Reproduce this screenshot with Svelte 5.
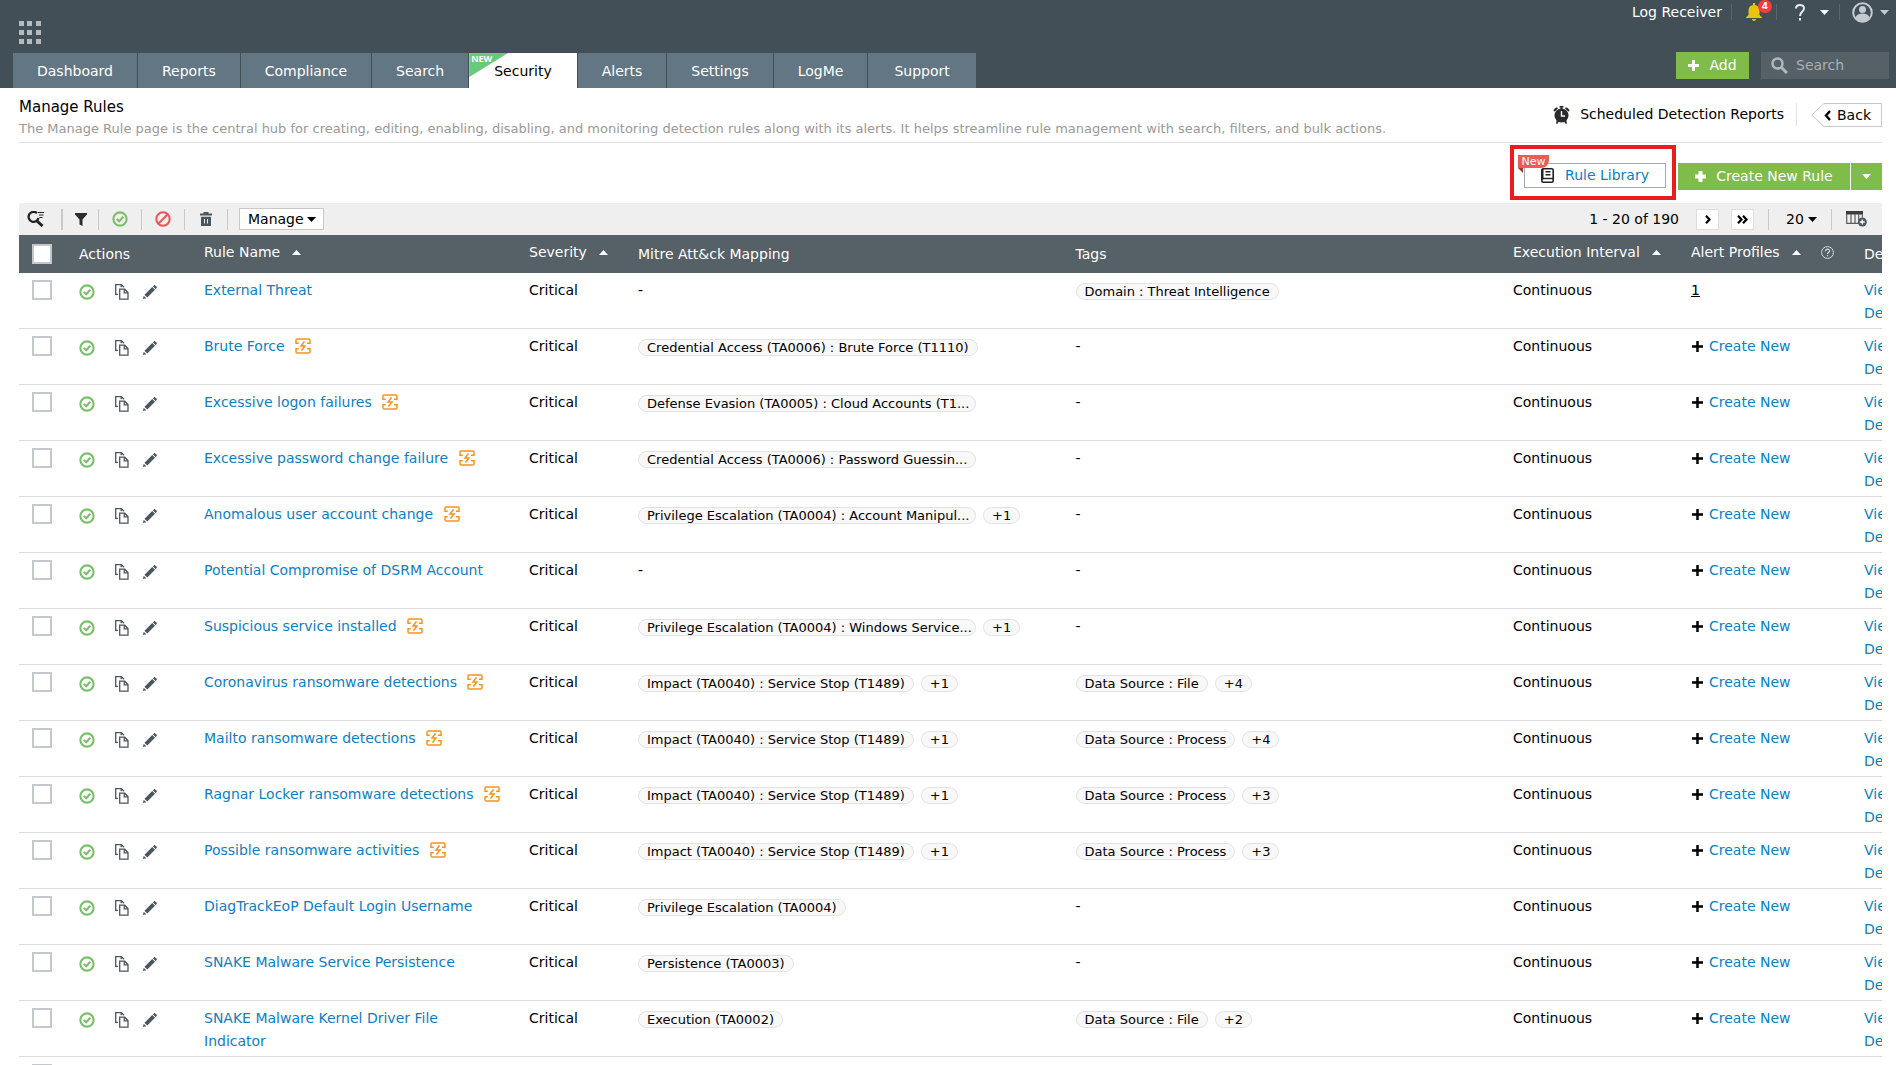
<script>
	const tabs = ['Dashboard', 'Reports', 'Compliance', 'Search', 'Security', 'Alerts', 'Settings', 'LogMe', 'Support'];
	const activeTab = 'Security';

	const stop = 'Impact (TA0040) : Service Stop (T1489)';

	const rules = [
		{ name: 'External Threat', tag: 'Domain : Threat Intelligence', profiles: 1 },
		{ name: 'Brute Force', ml: true, mitre: 'Credential Access (TA0006) : Brute Force (T1110)' },
		{ name: 'Excessive logon failures', ml: true, mitre: 'Defense Evasion (TA0005) : Cloud Accounts (T1...', cut: true },
		{ name: 'Excessive password change failure', ml: true, mitre: 'Credential Access (TA0006) : Password Guessin...', cut: true },
		{ name: 'Anomalous user account change', ml: true, mitre: 'Privilege Escalation (TA0004) : Account Manipul...', cut: true, mitreMore: 1 },
		{ name: 'Potential Compromise of DSRM Account' },
		{ name: 'Suspicious service installed', ml: true, mitre: 'Privilege Escalation (TA0004) : Windows Service...', cut: true, mitreMore: 1 },
		{ name: 'Coronavirus ransomware detections', ml: true, mitre: stop, mitreMore: 1, tag: 'Data Source : File', tagMore: 4 },
		{ name: 'Mailto ransomware detections', ml: true, mitre: stop, mitreMore: 1, tag: 'Data Source : Process', tagMore: 4 },
		{ name: 'Ragnar Locker ransomware detections', ml: true, mitre: stop, mitreMore: 1, tag: 'Data Source : Process', tagMore: 3 },
		{ name: 'Possible ransomware activities', ml: true, mitre: stop, mitreMore: 1, tag: 'Data Source : Process', tagMore: 3 },
		{ name: 'DiagTrackEoP Default Login Username', mitre: 'Privilege Escalation (TA0004)' },
		{ name: 'SNAKE Malware Service Persistence', mitre: 'Persistence (TA0003)' },
		{ name: 'SNAKE Malware Kernel Driver File Indicator', mitre: 'Execution (TA0002)', tag: 'Data Source : File', tagMore: 2 }
	];
</script>

{#snippet caret()}
	<svg class="caret" width="9" height="5" viewBox="0 0 9 5" aria-hidden="true"><path d="M0 0h9L4.500 5z" fill="currentColor" /></svg>
{/snippet}

{#snippet sortArrow()}
	<svg width="9" height="5" viewBox="0 0 9 5" aria-hidden="true"><path d="M0 5h9L4.500 0z" fill="#fff" /></svg>
{/snippet}

{#snippet plus(weight)}
	<svg width="11" height="11" viewBox="0 0 11 11" stroke="currentColor" stroke-width={weight} aria-hidden="true"><path d="M5.500 0v11M0 5.500h11" /></svg>
{/snippet}

{#snippet enabled()}
	<svg width="16" height="16" viewBox="0 0 16 16" fill="none" stroke="#7bbf6a" aria-hidden="true">
		<circle cx="8" cy="8" r="6.600" stroke-width="2.100" />
		<path d="M4.800 8l2.400 2.300 4.200-4.500" stroke-width="2.200" />
	</svg>
{/snippet}

{#snippet chips(text, more, cut)}
	{#if text}
		<span class="chip" class:cut>{text}</span>{#if more}<button class="chip more">+{more}</button>{/if}
	{:else}
		<span>-</span>
	{/if}
{/snippet}

<div class="page">
	<header>
		<div class="left">
			<button class="apps" aria-label="Apps">
				<svg width="22" height="23" viewBox="0 0 22 23" fill="#b4babd">
					{#each [0, 9, 18] as y}
						{#each [0, 8, 17] as x}
							<rect {x} {y} width="5" height="5" />
						{/each}
					{/each}
				</svg>
			</button>
			<nav>
				{#each tabs as tab}
					<a href="#{tab.toLowerCase()}" class:active={tab === activeTab}>
						{#if tab === activeTab}<span class="corner"><b>NEW</b></span>{/if}
						{tab}
					</a>
				{/each}
			</nav>
		</div>
		<div class="right">
			<div class="user-bar">
				<a class="receiver" href="#log-receiver">Log Receiver</a>
				<button class="bell" aria-label="Notifications">
					<svg width="16" height="18" viewBox="0 0 16 18" fill="#eac30f"><path d="M7 0h2v2c3 .5 4.500 2.500 4.500 5.500V12l2.500 2.500V15H0v-.5L2.500 12V7.500C2.500 4.500 4 2.500 7 2zM6 16h4c0 1-1 2-2 2s-2-1-2-2z" /></svg>
					<span>4</span>
				</button>
				<button class="help" aria-label="Help">
					<svg width="10" height="17" viewBox="0 0 10 17" fill="none" stroke="#e6e9ea" stroke-width="2"><path d="M1 4.500C1 2 2.500 1 4.800 1 7.300 1 9 2.300 9 4.400 9 7.500 5 7.500 5 12M5 14v2.500" /></svg>
					{@render caret()}
				</button>
				<button class="account" aria-label="Account">
					<svg width="21" height="21" viewBox="0 0 21 21"><circle cx="10.500" cy="10.500" r="9.300" fill="none" stroke="#c3cad0" stroke-width="2" /><circle cx="10.500" cy="7.500" r="3.500" fill="#c3cad0" /><path d="M3.500 15c1.500-2.500 4-3.500 7-3.500s5.500 1 7 3.500c-1.500 2.800-4 4.500-7 4.500s-5.500-1.700-7-4.500z" fill="#c3cad0" /></svg>
					{@render caret()}
				</button>
			</div>
			<div class="search-bar">
				<button class="green add">{@render plus(3)}Add</button>
				<label class="search">
					<svg width="17" height="17" viewBox="0 0 17 17" fill="none" stroke="#b0b8bd"><circle cx="6.500" cy="6.500" r="5" stroke-width="2.500" /><path d="M10 10l6 6" stroke-width="3" /></svg>
					<input type="text" placeholder="Search" aria-label="Search" />
				</label>
			</div>
		</div>
	</header>

	<main>
		<div class="title-row">
			<div>
				<h1>Manage Rules</h1>
				<p>The Manage Rule page is the central hub for creating, editing, enabling, disabling, and monitoring detection rules along with its alerts. It helps streamline rule management with search, filters, and bulk actions.</p>
			</div>
			<div class="title-links">
				<a class="reports" href="#scheduled">
					<svg width="17" height="18" viewBox="0 0 17 18">
						<path d="M.5 5C.8 3 2.300 1.700 4.200 1.300L5 2.500 1.800 5.600zM16.500 5C16.200 3 14.700 1.700 12.800 1.300L12 2.500l3.200 3.100zM6.500 0h4v1.500h-1V3h-2V1.500h-1zM3 17.500L3.800 14l2.200 1.500-1.500 2.200zM14 17.500L13.200 14 11 15.500l1.500 2.200z" fill="#2b2b2b" />
						<circle cx="8.500" cy="9.500" r="7" fill="#2b2b2b" />
						<path d="M8.500 5v5h3.500" fill="none" stroke="#fff" stroke-width="1.400" />
					</svg>
					Scheduled Detection Reports
				</a>
				<a class="back" href="#back">
					<svg class="tip" width="13" height="24" viewBox="0 0 13 24"><path d="M13 .5L.700 12 13 23.500" fill="#fff" stroke="#c9c9c9" /></svg>
					<span>
						<svg width="7" height="11" viewBox="0 0 7 11"><path d="M6 1L2 5.500 6 10" fill="none" stroke="#000" stroke-width="2.400" /></svg>
						Back
					</span>
				</a>
			</div>
		</div>

		<div class="action-row">
			<div class="highlight">
				<button class="library">
					<svg width="13" height="15" viewBox="0 0 13 15" fill="none" stroke="#222"><rect x=".8" y=".8" width="11.400" height="13.400" rx="1.500" stroke-width="1.600" /><path d="M1.500 1v10.500" stroke-width="2" /><path d="M1 10.500h11" stroke-width="1.400" /><path d="M4.500 3.800h5M4.500 6.800h5" stroke-width="1.400" /></svg>
					Rule Library
				</button>
				<span class="ribbon">New</span>
			</div>
			<button class="green create">{@render plus(4)}Create New Rule</button>
			<button class="green split" aria-label="More create options">{@render caret()}</button>
		</div>

		<div class="toolbar">
			<div class="tools">
				<button class="tool find" aria-label="Search rules">
					<svg width="18" height="16" viewBox="0 0 18 16" fill="none" stroke="#222"><path d="M10 2.200A5 5 0 1 0 11.500 7" stroke-width="2.300" /><path d="M9.500 9.500l6 5.500" stroke-width="3" /><path d="M11 1.500h6M12 4h4.500M12.500 6.500h3" stroke-width="1.200" /></svg>
				</button>
				<button class="tool filter" aria-label="Filter">
					<svg width="12" height="13" viewBox="0 0 12 13"><path d="M0 0h12v1.500L7.500 6.500V13l-3-1.500v-5L0 1.500z" fill="#2d2d2d" /></svg>
				</button>
				<button class="tool" aria-label="Enable">{@render enabled()}</button>
				<button class="tool" aria-label="Disable">
					<svg width="16" height="16" viewBox="0 0 16 16" fill="none" stroke="#ec5656" stroke-width="2"><circle cx="8" cy="8" r="6.700" /><path d="M3.300 12.700l9.400-9.400" /></svg>
				</button>
				<button class="tool" aria-label="Delete">
					<svg width="12" height="14" viewBox="0 0 12 14" fill="#4b575e"><path d="M3.500 0h5v1.500H12V3.500H0V1.500h3.500zM1 4.800h10V14H1zM4 7v4.500h1V7zM7 7v4.500h1V7z" fill-rule="evenodd" /></svg>
				</button>
				<label class="pick manage">
					<select aria-label="Manage"><option>Manage</option></select>
					{@render caret()}
				</label>
			</div>
			<div class="pager">
				<span>1 - 20 of 190</span>
				<button class="step next" aria-label="Next page"><svg width="6" height="9" viewBox="0 0 6 9"><path d="M1 .800l3.500 3.700L1 8.200" fill="none" stroke="#000" stroke-width="2.200" /></svg></button>
				<button class="step" aria-label="Last page"><svg width="11" height="9" viewBox="0 0 11 9"><path d="M1 .800l3.500 3.700L1 8.200M6 .800l3.500 3.700L6 8.200" fill="none" stroke="#000" stroke-width="2.200" /></svg></button>
				<label class="pick size">
					<select aria-label="Rows per page"><option>20</option></select>
					{@render caret()}
				</label>
				<button class="columns" aria-label="Choose columns">
					<svg width="21" height="16" viewBox="0 0 21 16"><path d="M0 0h17v3.500H0z" fill="#3f3b39" /><path d="M.700 3v9.300H12M5 3v9M9 3v9M12.700 3v6M16.300 3v3.500" fill="none" stroke="#5c5c5c" stroke-width="1.200" /><circle cx="16.300" cy="11" r="4.500" fill="#4b575e" /><path d="M16.300 8.500v5M13.800 11h5" stroke="#fff" stroke-width="1.400" /></svg>
				</button>
			</div>
		</div>

		<div class="grid">
			<table>
				<colgroup>
					<col class="c-check" /><col class="c-actions" /><col class="c-name" /><col class="c-severity" /><col /><col /><col class="c-exec" /><col class="c-alert" /><col class="c-details" />
				</colgroup>
				<thead>
					<tr>
						<th class="check"><input type="checkbox" aria-label="Select all rules" /></th>
						<th>Actions</th>
						<th class="sortable"><button>Rule Name {@render sortArrow()}</button></th>
						<th class="sortable"><button>Severity {@render sortArrow()}</button></th>
						<th>Mitre Att&amp;ck Mapping</th>
						<th>Tags</th>
						<th class="sortable"><button>Execution Interval {@render sortArrow()}</button></th>
						<th class="sortable">
							<button>
								Alert Profiles {@render sortArrow()}
								<svg class="hint" width="13" height="13" viewBox="0 0 13 13" fill="none" stroke="#d5d9db"><circle cx="6.500" cy="6.500" r="5.900" /><path d="M4.600 5.200c0-2.700 4-2.500 4-.3C8.600 6.300 6.500 6.300 6.500 8M6.500 9v1.300" stroke-width="1.200" /></svg>
							</button>
						</th>
						<th>Details</th>
					</tr>
				</thead>
				<tbody>
					{#each rules as rule}
						<tr>
							<td class="check"><input type="checkbox" aria-label="Select {rule.name}" /></td>
							<td>
								<div class="actions">
									<button aria-label="Disable rule">{@render enabled()}</button>
									<button class="copy" aria-label="Copy rule">
										<svg width="14" height="16" viewBox="0 0 14 16" fill="none" stroke="#4b575e" stroke-width="1.300"><path d="M3 10.300H.700V.700h5.800L9 3.300M6.200.700V3.300" /><path d="M4.700 5.200h5l3.300 3.300v6.700H4.700zM9.300 5.200v3.700h3.700" /></svg>
									</button>
									<button class="edit" aria-label="Edit rule">
										<svg width="14" height="14" viewBox="0 0 14 14" fill="#4b575e"><path d="M0 14l.7-3.300 2.600 2.600zM1.500 9.700l7.700-7.700 2.800 2.800-7.700 7.700zM9.900 1.300l.9-.9c.5-.5 1-.4 1.500 0l1.300 1.300c.4.5.5 1 0 1.500l-.9.9z" /></svg>
									</button>
								</div>
							</td>
							<td class="name">
								<a href="#rule">{rule.name}</a>
								{#if rule.ml}
									<svg class="ml" width="16" height="16" viewBox="0 0 16 16" fill="none" stroke="#f7931e" stroke-width="1.500"><path d="M1 5.200V2.200C1 1.300 1.300.9 2.200.9h11.600c.9 0 1.200.4 1.200 1.300v3h-3M1 10.800v3c0 .9.3 1.300 1.200 1.300h11.600c.9 0 1.200-.4 1.200-1.300v-3h-3M.3 5.200h3.500M.3 10.800h3.500M9.500 3.500L6 8h4l-3.500 4.500" /></svg>
								{/if}
							</td>
							<td>Critical</td>
							<td>{@render chips(rule.mitre, rule.mitreMore, rule.cut)}</td>
							<td>{@render chips(rule.tag, rule.tagMore)}</td>
							<td>Continuous</td>
							<td>
								{#if rule.profiles}
									<a class="count" href="#profiles">{rule.profiles}</a>
								{:else}
									<span class="new-profile">{@render plus(2.500)}<a href="#create">Create New</a></span>
								{/if}
							</td>
							<td><a href="#view">View</a><br /><a href="#details">Details</a></td>
						</tr>
					{/each}
					<tr>
						<td class="check"><input type="checkbox" aria-label="Select rule" /></td>
						<td colspan="8"></td>
					</tr>
				</tbody>
			</table>
		</div>
	</main>
</div>

<style>
	:global(body) {
		background: #fff;
	}

	.page {
		height: 100vh;
		overflow: hidden;
		font-family: 'DejaVu Sans', Verdana, sans-serif;
		font-size: 14px;
		line-height: 23px;
		color: #000;
	}

	button,
	input,
	select {
		font: inherit;
		color: inherit;
	}

	button {
		display: flex;
		align-items: center;
		padding: 0;
		border: 0;
		background: none;
		cursor: pointer;
	}

	svg {
		flex: none;
	}

	a {
		color: #0c80c3;
		text-decoration: none;
	}

	/* Header */
	header {
		display: flex;
		justify-content: space-between;
		height: 88px;
		background: #434f57;
		color: #fff;
	}

	.left {
		display: flex;
		flex-direction: column;
		justify-content: space-between;
		padding: 21px 0 0 13px;
	}

	.apps {
		padding-left: 6px;
	}

	nav {
		display: flex;
		gap: 1px;
	}

	nav a {
		position: relative;
		height: 35px;
		padding: 0 24px;
		line-height: 37px;
		background: #627783;
		color: #fff;
	}

	nav a.active {
		padding: 0 25px;
		background: #fff;
		color: #000;
	}

	nav a:last-child {
		padding: 0 26px;
	}

	.corner {
		position: absolute;
		top: 0;
		left: 0;
		width: 39px;
		height: 24px;
		background: #68cb7b;
		clip-path: polygon(0 0, 100% 0, 0 100%);
	}

	.corner b {
		display: block;
		padding-left: 2px;
		font: bold 9px/12px 'Open Sans', sans-serif;
		color: #fff;
	}

	.right {
		display: flex;
		flex-direction: column;
		justify-content: space-between;
		padding: 0 7px 9px 0;
	}

	.user-bar {
		display: flex;
		align-items: center;
		justify-content: flex-end;
		height: 24px;
	}

	.user-bar button {
		height: 16px;
		border-left: 1px solid #5a656c;
	}

	.receiver {
		padding-right: 9px;
		color: #fff;
	}

	.bell {
		position: relative;
		width: 45px;
		padding-left: 14px;
	}

	.bell span {
		position: absolute;
		top: -4px;
		left: 26px;
		width: 14px;
		border-radius: 7px;
		background: #fb3b3b;
		font: bold 9px/13px 'DejaVu Sans', sans-serif;
		text-align: center;
		color: #fff;
	}

	.help {
		gap: 15px;
		width: 63px;
		padding-left: 18px;
	}

	.account {
		gap: 7px;
		padding-left: 12px;
		color: #c3cad0;
	}

	.search-bar {
		display: flex;
		justify-content: flex-end;
		gap: 12px;
	}

	.green {
		justify-content: center;
		height: 27px;
		background: #80bc4a;
		color: #fff;
	}

	.add {
		gap: 10px;
		width: 73px;
	}

	.search {
		display: flex;
		align-items: center;
		gap: 8px;
		width: 118px;
		height: 27px;
		padding-left: 10px;
		background: #566067;
	}

	.search input {
		width: 80px;
		padding: 0;
		border: 0;
		outline: 0;
		background: none;
		color: #fff;
	}

	.search input::placeholder {
		color: #a9b0b5;
		opacity: 1;
	}

	/* Page title */
	main {
		padding: 0 14px 0 19px;
	}

	.title-row {
		display: flex;
		justify-content: space-between;
		height: 54px;
		border-bottom: 1px solid #e2e2e2;
	}

	h1 {
		margin: 8px 0 0;
		font-size: 15px;
		font-weight: normal;
		line-height: 23px;
	}

	p {
		margin: 0;
		font-size: 13px;
		line-height: 19px;
		white-space: nowrap;
		color: #999;
	}

	.title-links {
		display: flex;
		align-items: flex-start;
		padding-top: 15px;
	}

	.reports {
		display: flex;
		align-items: center;
		gap: 10px;
		padding-right: 12px;
		border-right: 1px solid #e2e2e2;
		white-space: nowrap;
		color: #000;
	}

	.back {
		display: flex;
		margin-left: 14px;
		color: #000;
	}

	.back span {
		display: flex;
		align-items: center;
		gap: 6px;
		height: 22px;
		padding-right: 10px;
		border: 1px solid #c9c9c9;
		border-left: 0;
	}

	/* Create buttons */
	.action-row {
		display: flex;
		align-items: flex-end;
		justify-content: flex-end;
		padding: 2px 0 3px;
	}

	.highlight {
		position: relative;
		margin-right: 2px;
		padding: 14px 6px 8px 10px;
		border: 4px solid #e81e1e;
	}

	.library {
		justify-content: center;
		gap: 11px;
		width: 142px;
		height: 25px;
		border: 1px solid #9faab3;
		color: #0c80c3;
	}

	.ribbon {
		position: absolute;
		top: 6px;
		left: 4px;
		width: 31px;
		background: #ec5a5a;
		border-radius: 0 0 8px 0;
		font-size: 11px;
		line-height: 13px;
		text-align: center;
		color: #fff;
	}

	.ribbon::after {
		content: '';
		position: absolute;
		top: 13px;
		left: 0;
		border-top: 5px solid #a93226;
		border-left: 5px solid transparent;
	}

	.create,
	.split {
		margin-bottom: 10px;
	}

	.create {
		gap: 10px;
		width: 172px;
		margin-right: 1px;
	}

	.split {
		width: 31px;
	}

	/* Toolbar */
	.toolbar {
		display: flex;
		justify-content: space-between;
		height: 32px;
		background: #efefef;
	}

	.tools,
	.pager {
		display: flex;
		align-items: center;
	}

	.tool {
		justify-content: center;
		width: 43px;
		height: 21px;
		border-right: 1px solid #c9c9c9;
	}

	.find {
		justify-content: flex-start;
		width: 44px;
		padding-left: 8px;
		border-right-width: 2px;
	}

	.filter {
		width: 36px;
	}

	.pick {
		display: grid;
		align-items: center;
	}

	.pick select {
		grid-area: 1 / 1;
		width: 100%;
		padding: 0;
		border: 0;
		background: none;
		appearance: none;
		line-height: 20px;
	}

	.pick .caret {
		grid-area: 1 / 1;
		justify-self: end;
		pointer-events: none;
	}

	.manage {
		width: 68px;
		height: 20px;
		margin-left: 11px;
		padding: 0 7px 0 8px;
		border: 1px solid #c9c9c9;
		background: #fff;
	}

	.step {
		justify-content: center;
		width: 23px;
		height: 21px;
		margin-left: 12px;
		border: 1px solid #dedede;
		background: #fff;
	}

	.next {
		margin-left: 17px;
	}

	.size {
		width: 31px;
		height: 21px;
		margin-left: 14px;
		padding: 0 14px 0 17px;
		border: solid #c9c9c9;
		border-width: 0 1px;
	}

	.columns {
		padding: 0 15px 0 14px;
	}

	/* Rules table, its last column runs past the edge */
	.grid {
		overflow: hidden;
	}

	table {
		width: calc(100% + 70px);
		table-layout: fixed;
		border-spacing: 0;
	}

	.c-check {
		width: 60px;
	}
	.c-actions {
		width: 125px;
	}
	.c-name {
		width: 325px;
	}
	.c-severity {
		width: 109px;
	}
	.c-exec {
		width: 178px;
	}
	.c-alert {
		width: 173px;
	}
	.c-details {
		width: 88px;
	}

	th {
		height: 30px;
		padding: 8px 0 0;
		background: #566067;
		color: #fff;
		font-weight: normal;
		text-align: left;
		vertical-align: top;
	}

	th.sortable {
		height: 32px;
		padding-top: 6px;
	}

	th button {
		gap: 12px;
		white-space: nowrap;
	}

	.hint {
		margin-left: 8px;
	}

	td {
		height: 46px;
		padding: 6px 0 3px;
		border-bottom: 1px solid #dcdcdc;
		vertical-align: top;
	}

	.name {
		padding-right: 27px;
	}

	.check input {
		display: block;
		width: 20px;
		height: 20px;
		margin: 1px 0 0 13px;
		border: 2px solid #c3c8ca;
		background: #fff;
		appearance: none;
	}

	.actions {
		display: flex;
		align-items: center;
		height: 25px;
	}

	.copy {
		margin-left: 20px;
	}

	.edit {
		margin-left: 14px;
	}

	.ml {
		margin-left: 6px;
		vertical-align: -3px;
	}

	.chip {
		display: inline-block;
		box-sizing: border-box;
		height: 17px;
		padding: 0 8px;
		border: 1px solid #e2e2e2;
		border-radius: 9px;
		background: #f8f8f8;
		font-size: 13px;
		line-height: 15px;
		white-space: nowrap;
		vertical-align: middle;
	}

	.cut {
		width: 338px;
	}

	.more {
		margin-left: 7px;
	}

	.count {
		color: #000;
		text-decoration: underline;
	}

	.new-profile {
		display: flex;
		align-items: center;
		gap: 6px;
		padding-left: 1px;
	}
</style>
